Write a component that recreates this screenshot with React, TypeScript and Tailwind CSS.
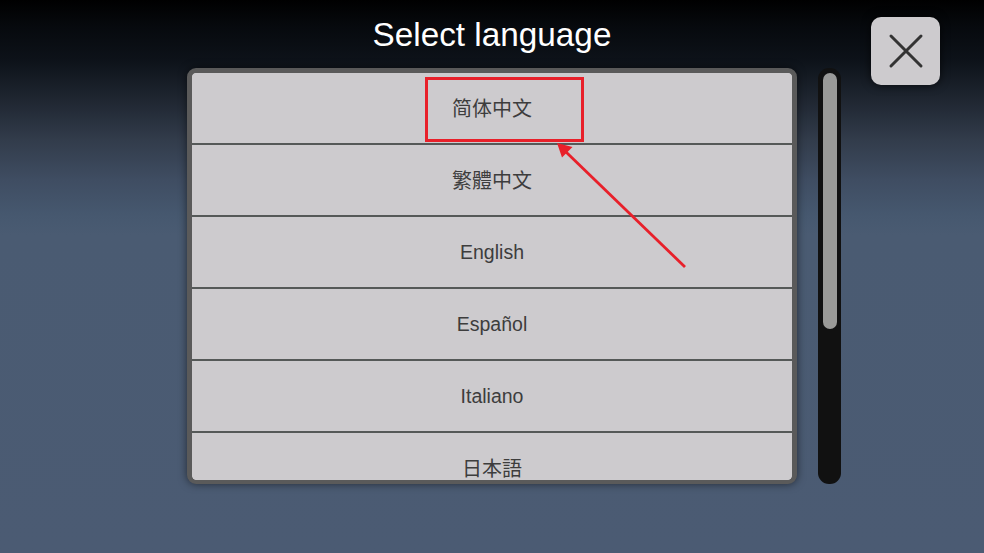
import React from "react";

const languages = [
  { label: "简体中文", font: "text-[20px] font-['Liberation_Sans','Noto_Sans_CJK_SC',sans-serif]" },
  { label: "繁體中文", font: "text-[20px] font-['Liberation_Sans','Noto_Sans_CJK_TC',sans-serif]" },
  { label: "English", font: "text-[19.5px] font-['Liberation_Sans',sans-serif]" },
  { label: "Español", font: "text-[19.5px] font-['Liberation_Sans',sans-serif]" },
  { label: "Italiano", font: "text-[19.5px] font-['Liberation_Sans',sans-serif]" },
  { label: "日本語", font: "text-[20px] font-['Liberation_Sans','Noto_Sans_CJK_JP',sans-serif]" },
];

function CloseIcon() {
  return (
    <svg width="36" height="36" viewBox="0 0 36 36" aria-hidden="true">
      <path
        d="M3 3 L33 33 M33 3 L3 33"
        stroke="#333333"
        strokeWidth="3"
        strokeLinecap="round"
        fill="none"
      />
    </svg>
  );
}

export default function App() {
  return (
    <div className="relative w-[984px] h-[553px] overflow-hidden bg-[linear-gradient(to_bottom,#000000_0px,#06090d_25px,#0d1219_60px,#1f2631_100px,#323c4b_140px,#3f4d62_180px,#46586f_215px,#4a5b72_235px,#4b5b73_553px)] font-['Liberation_Sans',sans-serif]">
      <div className="flex items-start pl-[187px]">
        {/* title + list */}
        <div className="flex flex-col w-[610px]">
          <div className="h-[68px] flex items-center justify-center pt-[2px]">
            <h1 className="text-[33.3px] text-white leading-none">Select language</h1>
          </div>
          <div className="h-[416px] rounded-[9px] border-[5px] border-b-4 border-[#5a5a5a] bg-[#5a5a5a] shadow-[0_0_8px_rgba(0,0,0,0.55)] overflow-hidden">
            <div className="h-full rounded-[4px] overflow-hidden bg-[#cdcbce]">
              {languages.map((lang) => (
                <div
                  key={lang.label}
                  className="h-[72px] shrink-0 flex items-center justify-center pt-[2px] border-b-2 border-[#555958] bg-[#cdcbce]"
                >
                  <span className={`text-[#3d3d3d] ${lang.font}`}>{lang.label}</span>
                </div>
              ))}
            </div>
          </div>
        </div>

        {/* scrollbar */}
        <div className="ml-[21px] mt-[68px] w-[23px] h-[416px] rounded-[11px] bg-[#111111] p-[4.5px] pt-[5px]">
          <div className="h-[256px] w-[14px] rounded-full bg-[#9a9a98]" />
        </div>

        {/* close */}
        <button className="ml-[30px] mt-[17px] w-[69px] h-[68px] rounded-[10px] bg-[#cdcbce] flex items-center justify-center shadow-[0_0_10px_rgba(0,0,0,0.7)]">
          <CloseIcon />
        </button>
      </div>

      {/* annotation overlay */}
      <div className="absolute left-[425px] top-[77px] w-[159px] h-[65px] border-[3px] border-[#e8202a]" />
      <svg className="absolute left-0 top-0" width="984" height="553" aria-hidden="true">
        <line x1="685" y1="267" x2="566" y2="152" stroke="#e8202a" strokeWidth="2.8" />
        <polygon points="557,143 572.5,147 562,157.5" fill="#e8202a" />
      </svg>
    </div>
  );
}
